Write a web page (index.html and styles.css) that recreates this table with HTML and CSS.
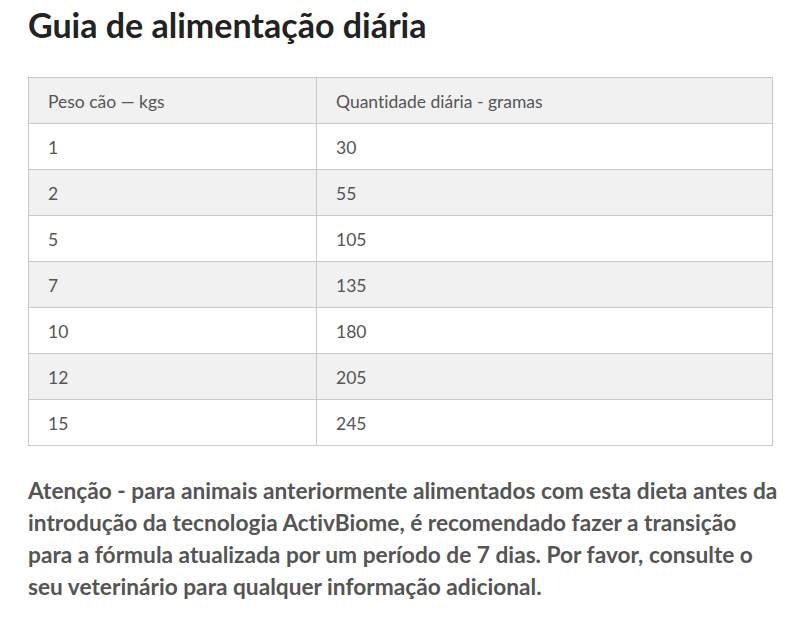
FILE: index.html
```html
<!DOCTYPE html>
<html lang="pt">
<head>
<meta charset="utf-8">
<link rel="stylesheet" href="styles.css">
</head>
<body>
<div class="page">
  <h2 class="title">Guia de alimentação diária</h2>
  <table class="feed">
    <thead>
      <tr><th>Peso cão — kgs</th><th>Quantidade diária - gramas</th></tr>
    </thead>
    <tbody>
      <tr><td>1</td><td>30</td></tr>
      <tr><td>2</td><td>55</td></tr>
      <tr><td>5</td><td>105</td></tr>
      <tr><td>7</td><td>135</td></tr>
      <tr><td>10</td><td>180</td></tr>
      <tr><td>12</td><td>205</td></tr>
      <tr><td>15</td><td>245</td></tr>
    </tbody>
  </table>
  <p class="note">Atenção - para animais anteriormente alimentados com esta dieta antes da introdução da tecnologia ActivBiome, é recomendado fazer a transição para a fórmula atualizada por um período de 7 dias. Por favor, consulte o seu veterinário para qualquer informação adicional.</p>
</div>
</body>
</html>
```
FILE: styles.css
```css
html, body { margin: 0; padding: 0; background: #fff; }
body { font-family: Lato, "Open Sans", sans-serif; font-variant-ligatures: none; }
.page { padding: 0 14px 0 28px; width: 755px; }
.title {
  margin: 0;
  padding-top: 3px;
  font-size: 34px;
  line-height: 44px;
  font-weight: 700;
  color: #222;
  height: 74px;
}
.feed {
  width: 745px;
  border-collapse: collapse;
  font-size: 17.5px;
  color: #555;
}
.feed th, .feed td {
  border: 1px solid #c8c8c8;
  text-align: left;
  font-weight: 400;
  padding: 2px 19px 0;
  height: 43px;
}
.feed th:first-child, .feed td:first-child { width: 249px; }
.feed thead tr { background: #f1f1f2; }
.feed tbody tr:nth-child(even) { background: #f1f1f2; }
.note {
  margin: 29px 0 0;
  font-size: 22.7px;
  line-height: 32px;
  font-weight: 700;
  color: #555;
}
```
